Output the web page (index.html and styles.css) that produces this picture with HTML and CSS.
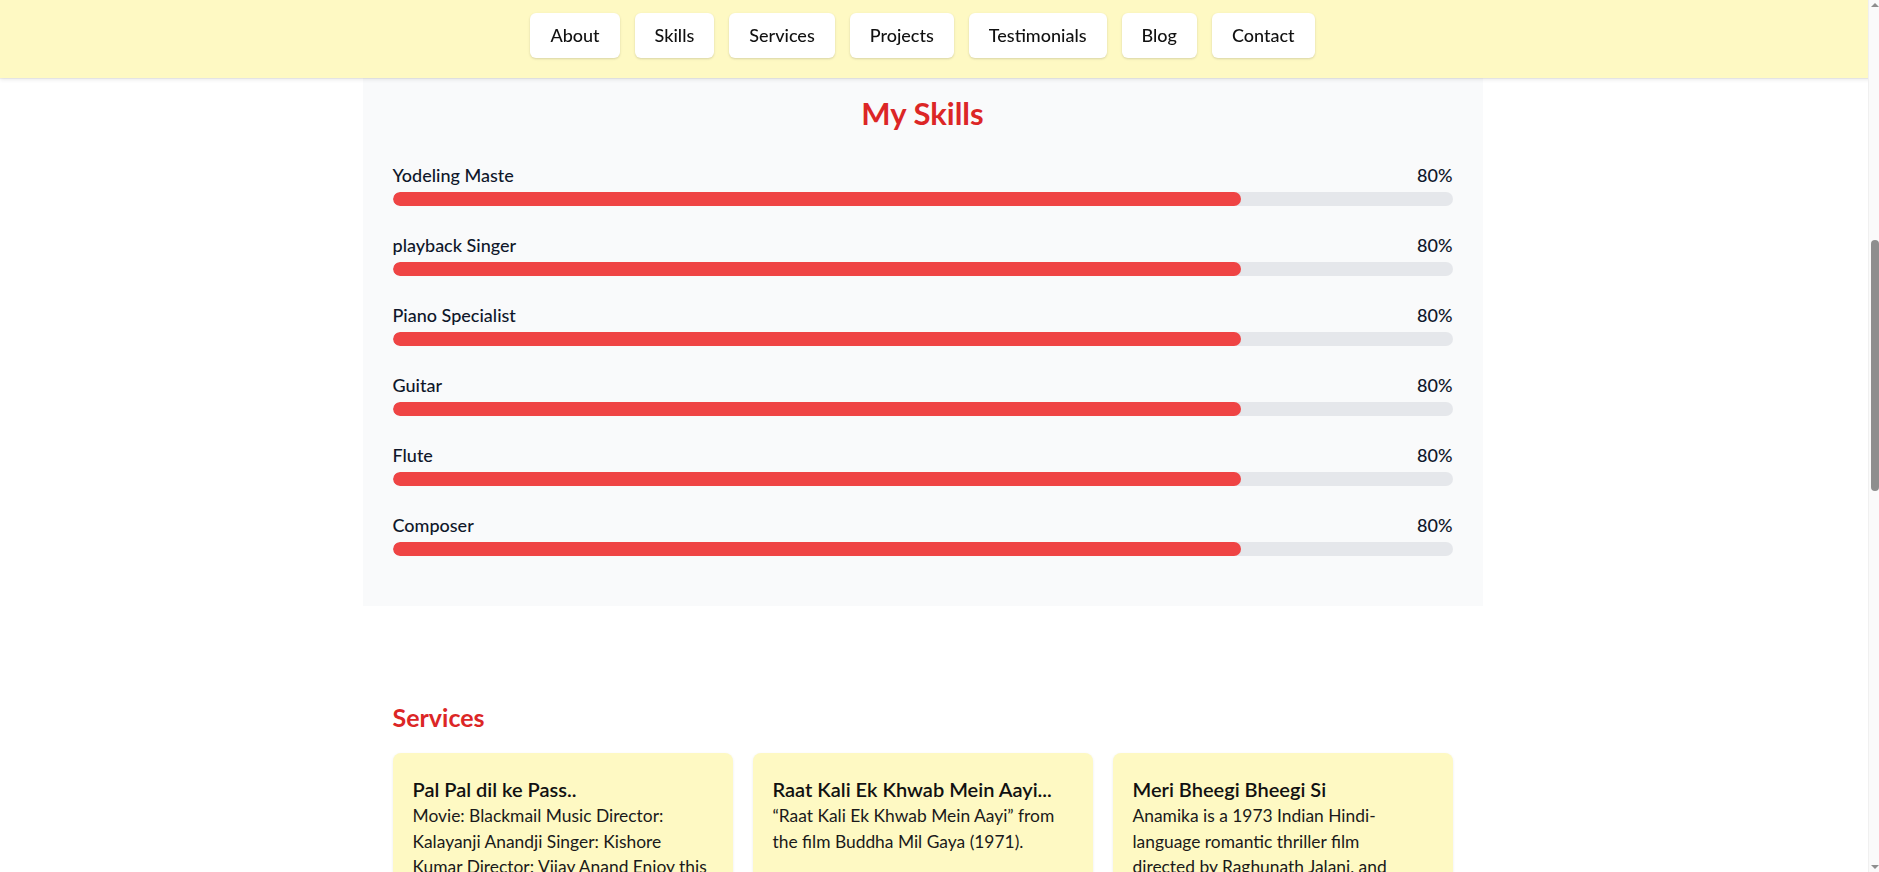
FILE: index.html
```html
<!DOCTYPE html>
<html lang="en">
<head>
<meta charset="utf-8">
<title>Portfolio</title>
<link rel="stylesheet" href="styles.css">
</head>
<body>
<header class="site-header">
  <nav class="nav">
    <a class="nav-btn" href="#about">About</a>
    <a class="nav-btn" href="#skills">Skills</a>
    <a class="nav-btn" href="#services">Services</a>
    <a class="nav-btn" href="#projects">Projects</a>
    <a class="nav-btn" href="#testimonials">Testimonials</a>
    <a class="nav-btn" href="#blog">Blog</a>
    <a class="nav-btn" href="#contact">Contact</a>
  </nav>
</header>

<div class="scrollbar" aria-hidden="true">
  <span class="sb-arrow sb-up"></span>
  <span class="sb-thumb"></span>
  <span class="sb-arrow sb-down"></span>
</div>

<main class="page">
  <section class="skills-card" id="skills">
    <h2 class="skills-title">My Skills</h2>
    <div class="skill">
      <div class="skill-head"><span>Yodeling Maste</span><span>80%</span></div>
      <div class="bar"><div class="bar-fill" style="width:80%"></div></div>
    </div>
    <div class="skill">
      <div class="skill-head"><span>playback Singer</span><span>80%</span></div>
      <div class="bar"><div class="bar-fill" style="width:80%"></div></div>
    </div>
    <div class="skill">
      <div class="skill-head"><span>Piano Specialist</span><span>80%</span></div>
      <div class="bar"><div class="bar-fill" style="width:80%"></div></div>
    </div>
    <div class="skill">
      <div class="skill-head"><span>Guitar</span><span>80%</span></div>
      <div class="bar"><div class="bar-fill" style="width:80%"></div></div>
    </div>
    <div class="skill">
      <div class="skill-head"><span>Flute</span><span>80%</span></div>
      <div class="bar"><div class="bar-fill" style="width:80%"></div></div>
    </div>
    <div class="skill">
      <div class="skill-head"><span>Composer</span><span>80%</span></div>
      <div class="bar"><div class="bar-fill" style="width:80%"></div></div>
    </div>
  </section>

  <section class="services" id="services">
    <h2 class="section-title">Services</h2>
    <div class="service-grid">
      <article class="service-card">
        <h3 class="service-title">Pal Pal dil ke Pass..</h3>
        <p class="service-text">Movie: Blackmail Music Director:<br>Kalayanji Anandji Singer: Kishore<br>Kumar Director: Vijay Anand Enjoy this<br>evergreen romantic song from the seventies.</p>
      </article>
      <article class="service-card">
        <h3 class="service-title">Raat Kali Ek Khwab Mein Aayi...</h3>
        <p class="service-text">“Raat Kali Ek Khwab Mein Aayi” from<br>the film Buddha Mil Gaya (1971).</p>
      </article>
      <article class="service-card">
        <h3 class="service-title">Meri Bheegi Bheegi Si</h3>
        <p class="service-text">Anamika is a 1973 Indian Hindi-<br>language romantic thriller film<br>directed by Raghunath Jalani, and<br>produced by Ramesh Behl.</p>
      </article>
    </div>
  </section>

  <section class="services" id="projects">
    <h2 class="section-title">Projects</h2>
    <div class="service-grid">
      <article class="service-card">
        <h3 class="service-title">Live Concert</h3>
        <p class="service-text">A tribute evening of classic Hindi film songs.</p>
      </article>
      <article class="service-card">
        <h3 class="service-title">Studio Album</h3>
        <p class="service-text">Original compositions recorded with a live band.</p>
      </article>
      <article class="service-card">
        <h3 class="service-title">Film Score</h3>
        <p class="service-text">Background music for an independent feature.</p>
      </article>
    </div>
  </section>
</main>
</body>
</html>
```

FILE: styles.css
```css
* { box-sizing: border-box; }

html, body { margin: 0; padding: 0; }

body {
  background: #ffffff;
  color: #111827;
  font-family: Lato, "Open Sans", sans-serif;
  padding-right: 34px;
}

.site-header {
  position: fixed;
  top: 0;
  left: 0;
  right: 0;
  z-index: 10;
  background: #fef9c3;
  box-shadow: 0 2px 4px rgba(0, 0, 0, 0.08), 0 1px 1px rgba(0, 0, 0, 0.05);
  padding-right: 34px;
}

.nav {
  display: flex;
  justify-content: center;
  gap: 15px;
  padding: 13px 0 20px;
}

.nav-btn {
  display: block;
  height: 45px;
  line-height: 45px;
  padding: 0 20px;
  background: #ffffff;
  border-radius: 6px;
  box-shadow: 0 1px 3px rgba(0, 0, 0, 0.1), 0 1px 2px rgba(0, 0, 0, 0.06);
  color: #111111;
  text-decoration: none;
  font-size: 18px;
  font-weight: 500;
}

/* browser-style scrollbar strip at the right edge */
.scrollbar {
  position: fixed;
  top: 0;
  right: 0;
  bottom: 0;
  width: 11px;
  z-index: 20;
  background: #fafafa;
  border-left: 1px solid #f0f0f0;
}

.sb-thumb {
  position: absolute;
  top: 240px;
  left: 2px;
  width: 8px;
  height: 251px;
  background: #8e8e8e;
  border-radius: 4px;
}

.sb-arrow {
  position: absolute;
  left: 2px;
  width: 0;
  height: 0;
  border-left: 4px solid transparent;
  border-right: 4px solid transparent;
}

.sb-up {
  top: 3px;
  border-bottom: 4px solid #8e8e8e;
}

.sb-down {
  bottom: 3px;
  border-top: 4px solid #8e8e8e;
}

.page {
  width: 1120px;
  margin: 0 auto;
  padding-top: 65px;
  padding-bottom: 80px;
}

.skills-card {
  background: #f9fafb;
  padding: 30px 30px 25px;
}

.skills-title {
  margin: 0 0 30px;
  text-align: center;
  color: #dc2626;
  font-size: 31px;
  line-height: 36px;
  font-weight: 700;
}

.skill { margin-bottom: 25px; }

.skill-head {
  display: flex;
  justify-content: space-between;
  font-size: 18px;
  line-height: 28px;
  font-weight: 500;
  color: #0f172a;
  margin-bottom: 3px;
}

.bar {
  height: 14px;
  background: #e5e7eb;
  border-radius: 999px;
  overflow: hidden;
}

.bar-fill {
  height: 100%;
  background: #ef4444;
  border-radius: 999px;
}

.services {
  margin-top: 95px;
  padding: 0 30px;
}

.section-title {
  margin: 0 0 20px;
  color: #dc2626;
  font-size: 25px;
  line-height: 32px;
  font-weight: 700;
}

.service-grid {
  display: grid;
  grid-template-columns: repeat(3, 1fr);
  gap: 20px;
}

.service-card {
  background: #fef9c3;
  border-radius: 8px;
  padding: 22px 12px 24px 20px;
  box-shadow: 0 1px 3px rgba(0, 0, 0, 0.08);
}

.service-title {
  margin: 0;
  font-size: 20px;
  line-height: 28px;
  font-weight: 600;
  color: #111111;
}

.service-text {
  margin: 0;
  font-size: 17.4px;
  line-height: 25.5px;
  color: #1a1a1a;
}
```
